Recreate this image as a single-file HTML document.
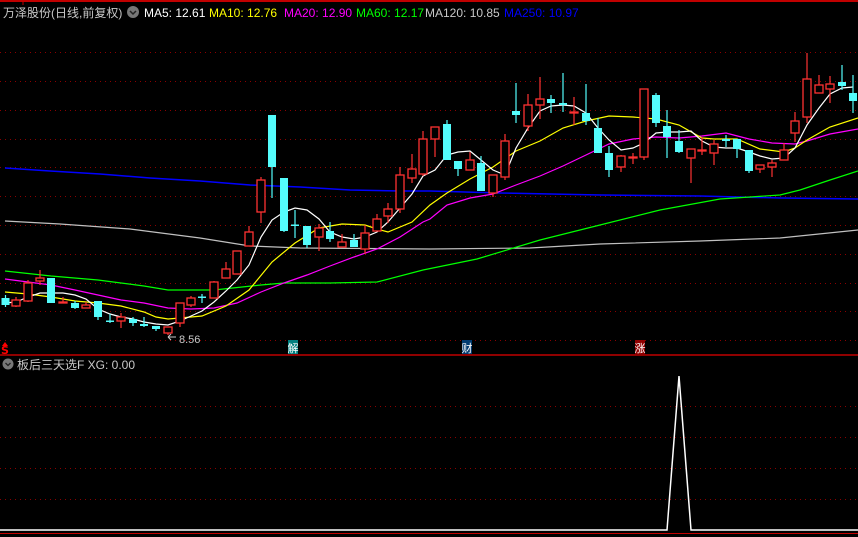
<!DOCTYPE html>
<html><head><meta charset="utf-8"><style>
html,body{margin:0;padding:0;background:#000;width:858px;height:537px;overflow:hidden}
svg{display:block}
text{font-family:"Liberation Sans","Noto Sans CJK SC",sans-serif}
</style></head><body>
<svg width="858" height="537" viewBox="0 0 858 537" xmlns="http://www.w3.org/2000/svg">
<rect width="858" height="537" fill="#000"/>
<line x1="0" y1="1" x2="858" y2="1" stroke="#c00000" stroke-width="2"/>
<line x1="23" y1="0" x2="23" y2="5" stroke="#c00000" stroke-width="1"/>
<g stroke="#8b0000" stroke-width="1" stroke-dasharray="1,4">
<line x1="0" y1="52.5" x2="858" y2="52.5"/><line x1="0" y1="81.5" x2="858" y2="81.5"/>
<line x1="0" y1="110.5" x2="858" y2="110.5"/><line x1="0" y1="139.5" x2="858" y2="139.5"/>
<line x1="0" y1="167.5" x2="858" y2="167.5"/><line x1="0" y1="196.5" x2="858" y2="196.5"/>
<line x1="0" y1="225.5" x2="858" y2="225.5"/><line x1="0" y1="254.5" x2="858" y2="254.5"/>
<line x1="0" y1="283.5" x2="858" y2="283.5"/><line x1="0" y1="311.5" x2="858" y2="311.5"/>
<line x1="0" y1="340.5" x2="858" y2="340.5"/>
<line x1="0" y1="406.5" x2="858" y2="406.5"/><line x1="0" y1="437.5" x2="858" y2="437.5"/>
<line x1="0" y1="468.5" x2="858" y2="468.5"/><line x1="0" y1="499.5" x2="858" y2="499.5"/>
</g>
<line x1="0" y1="355" x2="858" y2="355" stroke="#c00000" stroke-width="1.5"/>
<line x1="0" y1="533.5" x2="858" y2="533.5" stroke="#c00000" stroke-width="1"/>

<!-- header -->
<text x="3" y="17" font-size="12" fill="#c8c8c8">万泽股份(日线,前复权)</text>
<circle cx="133" cy="12" r="6" fill="#777"/>
<path d="M130 11 L133 14 L136 11" stroke="#222" stroke-width="1.5" fill="none"/>
<text x="144" y="17" font-size="12" fill="#fff">MA5: 12.61</text>
<text x="209" y="17" font-size="12" fill="#ffff00">MA10: 12.76</text>
<text x="284" y="17" font-size="12" fill="#ff00ff">MA20: 12.90</text>
<text x="356" y="17" font-size="12" fill="#00ff00">MA60: 12.17</text>
<text x="425" y="17" font-size="12" fill="#c8c8c8">MA120: 10.85</text>
<text x="504" y="17" font-size="12" fill="#0000ff">MA250: 10.97</text>

<!-- MA lines -->
<g fill="none" stroke-width="1.2">
<polyline stroke="#0000ff" stroke-width="1.5" points="5,168 50,171 100,174 150,178 200,181 250,185 300,187 350,190 400,191 430,191 500,193 600,195 700,196 780,198 858,199"/>
<polyline stroke="#c0c0c0" points="5,221 60,224 130,229 200,238 250,246 300,248 430,249 530,248 600,244 700,241 780,238 858,230"/>
<polyline stroke="#00ff00" points="5,271 51,276 98,280 121,283 144,286 168,290 214,290 261,285 284,283 330,283 377,282 423,270 477,259 540,240 600,225 660,210 720,199 780,195 800,190 830,180 858,171"/>
<polyline stroke="#ff00ff" points="5,279 28,282 51,285 75,290 98,295 121,300 144,303 168,308 191,309 214,308 237,303 261,292 284,283 307,275 330,266 354,257 377,249 400,237 423,222 430,219 447,205 470,198 493,194 516,185 540,176 563,166 586,155 609,144 633,139 656,137 679,138 702,136 726,133 749,139 772,143 795,144 807,141 830,134 858,129"/>
<polyline stroke="#ffff00" points="5,292 28,294 51,297 75,301 98,303 121,306 144,312 156,317 168,319 180,318 202,316 226,306 249,290 272,262 295,243 319,228 342,224 365,225 377,229 388,232 412,222 430,205 447,193 470,179 493,167 516,151 540,141 563,128 586,121 609,116 633,117 656,119 679,125 702,138 714,139 737,139 760,149 784,152 795,148 807,140 830,127 858,118"/>
<polyline stroke="#ffffff" points="5,303 16,302 28,297 40,293 51,293 63,293 75,295 86,299 98,309 110,314 121,317 133,319 144,322 156,324 168,325 180,321 191,316 202,311 214,302 226,291 237,280 249,265 261,237 272,220 284,212 295,208 307,210 319,219 330,232 342,237 354,239 365,237 377,232 388,222 400,208 412,194 423,176 435,170 447,155 458,152 470,151 481,160 493,170 505,175 516,148 528,128 540,111 551,106 563,105 574,106 586,113 598,128 609,140 621,150 633,148 644,143 656,133 667,132 679,132 691,131 702,141 714,147 726,148 737,148 749,152 760,156 772,159 784,158 795,148 807,125 819,108 830,94 842,88 853,87"/>
</g>

<!-- candles: wicks -->
<g stroke-width="1.2">
<g stroke="#54fcfc">
<line x1="5.5" y1="295" x2="5.5" y2="307"/><line x1="51" y1="278" x2="51" y2="303"/><line x1="75" y1="301" x2="75" y2="309"/><line x1="98" y1="301" x2="98" y2="320"/><line x1="110" y1="314" x2="110" y2="323"/><line x1="133" y1="317" x2="133" y2="326"/><line x1="144" y1="317" x2="144" y2="327"/><line x1="156" y1="326" x2="156" y2="331"/><line x1="202" y1="294" x2="202" y2="303"/><line x1="272" y1="115" x2="272" y2="198"/><line x1="284" y1="178" x2="284" y2="232"/><line x1="295" y1="210" x2="295" y2="238"/><line x1="307" y1="226" x2="307" y2="248"/><line x1="330" y1="222" x2="330" y2="242"/><line x1="354" y1="234" x2="354" y2="247"/><line x1="447" y1="120" x2="447" y2="160"/><line x1="458" y1="161" x2="458" y2="176"/><line x1="481" y1="156" x2="481" y2="191"/><line x1="516" y1="83" x2="516" y2="123"/><line x1="551" y1="95" x2="551" y2="113"/><line x1="563" y1="73" x2="563" y2="112"/><line x1="586" y1="84" x2="586" y2="125"/><line x1="598" y1="118" x2="598" y2="153"/><line x1="609" y1="146" x2="609" y2="177"/><line x1="656" y1="93" x2="656" y2="127"/><line x1="667" y1="110" x2="667" y2="158"/><line x1="679" y1="130" x2="679" y2="153"/><line x1="726" y1="135" x2="726" y2="147"/><line x1="737" y1="139" x2="737" y2="158"/><line x1="749" y1="150" x2="749" y2="173"/><line x1="842" y1="65" x2="842" y2="90"/><line x1="853" y1="75" x2="853" y2="113"/>
</g>
<g stroke="#ff3232">
<line x1="16" y1="297" x2="16" y2="307"/><line x1="28" y1="280" x2="28" y2="302"/><line x1="40" y1="270" x2="40" y2="285"/><line x1="63" y1="297" x2="63" y2="303"/><line x1="86" y1="302" x2="86" y2="308"/><line x1="121" y1="313" x2="121" y2="328"/><line x1="168" y1="327" x2="168" y2="335"/><line x1="180" y1="303" x2="180" y2="327"/><line x1="191" y1="296" x2="191" y2="307"/><line x1="214" y1="281" x2="214" y2="298"/><line x1="226" y1="262" x2="226" y2="278"/><line x1="249" y1="226" x2="249" y2="246"/><line x1="261" y1="177" x2="261" y2="223"/><line x1="319" y1="224" x2="319" y2="251"/><line x1="342" y1="234" x2="342" y2="247"/><line x1="365" y1="225" x2="365" y2="254"/><line x1="377" y1="214" x2="377" y2="231"/><line x1="388" y1="203" x2="388" y2="223"/><line x1="400" y1="167" x2="400" y2="213"/><line x1="412" y1="154" x2="412" y2="183"/><line x1="423" y1="131" x2="423" y2="176"/><line x1="435" y1="127" x2="435" y2="157"/><line x1="470" y1="152" x2="470" y2="170"/><line x1="493" y1="175" x2="493" y2="197"/><line x1="505" y1="134" x2="505" y2="180"/><line x1="528" y1="94" x2="528" y2="131"/><line x1="540" y1="77" x2="540" y2="119"/><line x1="574" y1="97" x2="574" y2="125"/><line x1="621" y1="155" x2="621" y2="172"/><line x1="633" y1="153" x2="633" y2="164"/><line x1="644" y1="89" x2="644" y2="160"/><line x1="691" y1="149" x2="691" y2="183"/><line x1="702" y1="137" x2="702" y2="155"/><line x1="714" y1="140" x2="714" y2="165"/><line x1="760" y1="165" x2="760" y2="173"/><line x1="772" y1="160" x2="772" y2="177"/><line x1="784" y1="143" x2="784" y2="160"/><line x1="795" y1="112" x2="795" y2="142"/><line x1="807" y1="53" x2="807" y2="123"/><line x1="819" y1="75" x2="819" y2="93"/><line x1="830" y1="76" x2="830" y2="103"/>
</g>
</g>
<!-- cyan bodies -->
<g fill="#54fcfc">
<rect x="1.5" y="298" width="8" height="7"/><rect x="47" y="278" width="8" height="25"/><rect x="71" y="303" width="8" height="5"/><rect x="94" y="301" width="8" height="16"/><rect x="106" y="320.5" width="8" height="1.5"/><rect x="129" y="319" width="8" height="4"/><rect x="140" y="324" width="8" height="2"/><rect x="152" y="326" width="8" height="3"/><rect x="198" y="296.5" width="8" height="1.5"/><rect x="268" y="115" width="8" height="52"/><rect x="280" y="178" width="8" height="53"/><rect x="291" y="224.5" width="8" height="1.5"/><rect x="303" y="226" width="8" height="19"/><rect x="326" y="231" width="8" height="8"/><rect x="350" y="240" width="8" height="7"/><rect x="443" y="124" width="8" height="36"/><rect x="454" y="161" width="8" height="8"/><rect x="477" y="163" width="8" height="28"/><rect x="512" y="111" width="8" height="4"/><rect x="547" y="99" width="8" height="4"/><rect x="559" y="103" width="8" height="2"/><rect x="582" y="113" width="8" height="8"/><rect x="594" y="128" width="8" height="25"/><rect x="605" y="153" width="8" height="17"/><rect x="652" y="95" width="8" height="28"/><rect x="663" y="126" width="8" height="11"/><rect x="675" y="141" width="8" height="11"/><rect x="722" y="139" width="8" height="2"/><rect x="733" y="139" width="8" height="10"/><rect x="745" y="150" width="8" height="21"/><rect x="838" y="82" width="8" height="4"/><rect x="849" y="93" width="8" height="8"/>
</g>
<!-- red bodies -->
<g fill="#000" stroke="#ff3232" stroke-width="1.3">
<rect x="12" y="300" width="8" height="6"/><rect x="24" y="283" width="8" height="18"/><rect x="36" y="278" width="8" height="3"/><rect x="59" y="302" width="8" height="1"/><rect x="82" y="305" width="8" height="3"/><rect x="117" y="317" width="8" height="4"/><rect x="164" y="327" width="8" height="6"/><rect x="176" y="303" width="8" height="20"/><rect x="187" y="298" width="8" height="7"/><rect x="210" y="282" width="8" height="16"/><rect x="222" y="269" width="8" height="9"/><rect x="233" y="251" width="8" height="23"/><rect x="245" y="232" width="8" height="14"/><rect x="257" y="180" width="8" height="32"/><rect x="315" y="228" width="8" height="9"/><rect x="338" y="242" width="8" height="5"/><rect x="361" y="233" width="8" height="16"/><rect x="373" y="219" width="8" height="12"/><rect x="384" y="209" width="8" height="7"/><rect x="396" y="175" width="8" height="34"/><rect x="408" y="169" width="8" height="9"/><rect x="419" y="139" width="8" height="35"/><rect x="431" y="127" width="8" height="12"/><rect x="466" y="160" width="8" height="10"/><rect x="489" y="175" width="8" height="18"/><rect x="501" y="141" width="8" height="36"/><rect x="524" y="105" width="8" height="21"/><rect x="536" y="99" width="8" height="6"/><rect x="570" y="112" width="8" height="1"/><rect x="617" y="156" width="8" height="11"/><rect x="629" y="157" width="8" height="1"/><rect x="640" y="89" width="8" height="68"/><rect x="687" y="149" width="8" height="9"/><rect x="698" y="150" width="8" height="1"/><rect x="710" y="144" width="8" height="9"/><rect x="756" y="165" width="8" height="4"/><rect x="768" y="163" width="8" height="4"/><rect x="780" y="150" width="8" height="10"/><rect x="791" y="121" width="8" height="12"/><rect x="803" y="79" width="8" height="38"/><rect x="815" y="85" width="8" height="8"/><rect x="826" y="84" width="8" height="5"/>
</g>

<!-- low label -->
<path d="M168 337 L176 337 M168 337 L171 334 M168 337 L171 340" stroke="#c8c8c8" stroke-width="1" fill="none"/>
<text x="179" y="343" font-size="11" fill="#c8c8c8">8.56</text>

<!-- markers -->
<path d="M2 346 L5 342 L8 346 Z" fill="#ff0000"/>
<text x="1" y="354" font-size="11" font-weight="bold" fill="#ff0000" style="font-family:'DejaVu Sans',sans-serif">S</text>
<rect x="288" y="340" width="10" height="14" fill="#008080"/>
<text x="293" y="352" font-size="11" fill="#fff" text-anchor="middle">解</text>
<rect x="462" y="340" width="10" height="14" fill="#003a70"/>
<text x="467" y="352" font-size="11" fill="#fff" text-anchor="middle">财</text>
<rect x="635" y="340" width="10" height="14" fill="#900000"/>
<text x="640" y="352" font-size="11" fill="#fff" text-anchor="middle">涨</text>

<!-- lower panel -->
<circle cx="8" cy="364" r="5.5" fill="#777"/>
<path d="M5.5 363 L8 365.5 L10.5 363" stroke="#222" stroke-width="1.3" fill="none"/>
<text x="17" y="369" font-size="12" fill="#c8c8c8">板后三天选F  XG: 0.00</text>
<polyline fill="none" stroke="#fff" stroke-width="1.5" points="0,530 667,530 679,376 691,530 858,530"/>
</svg>
</body></html>
